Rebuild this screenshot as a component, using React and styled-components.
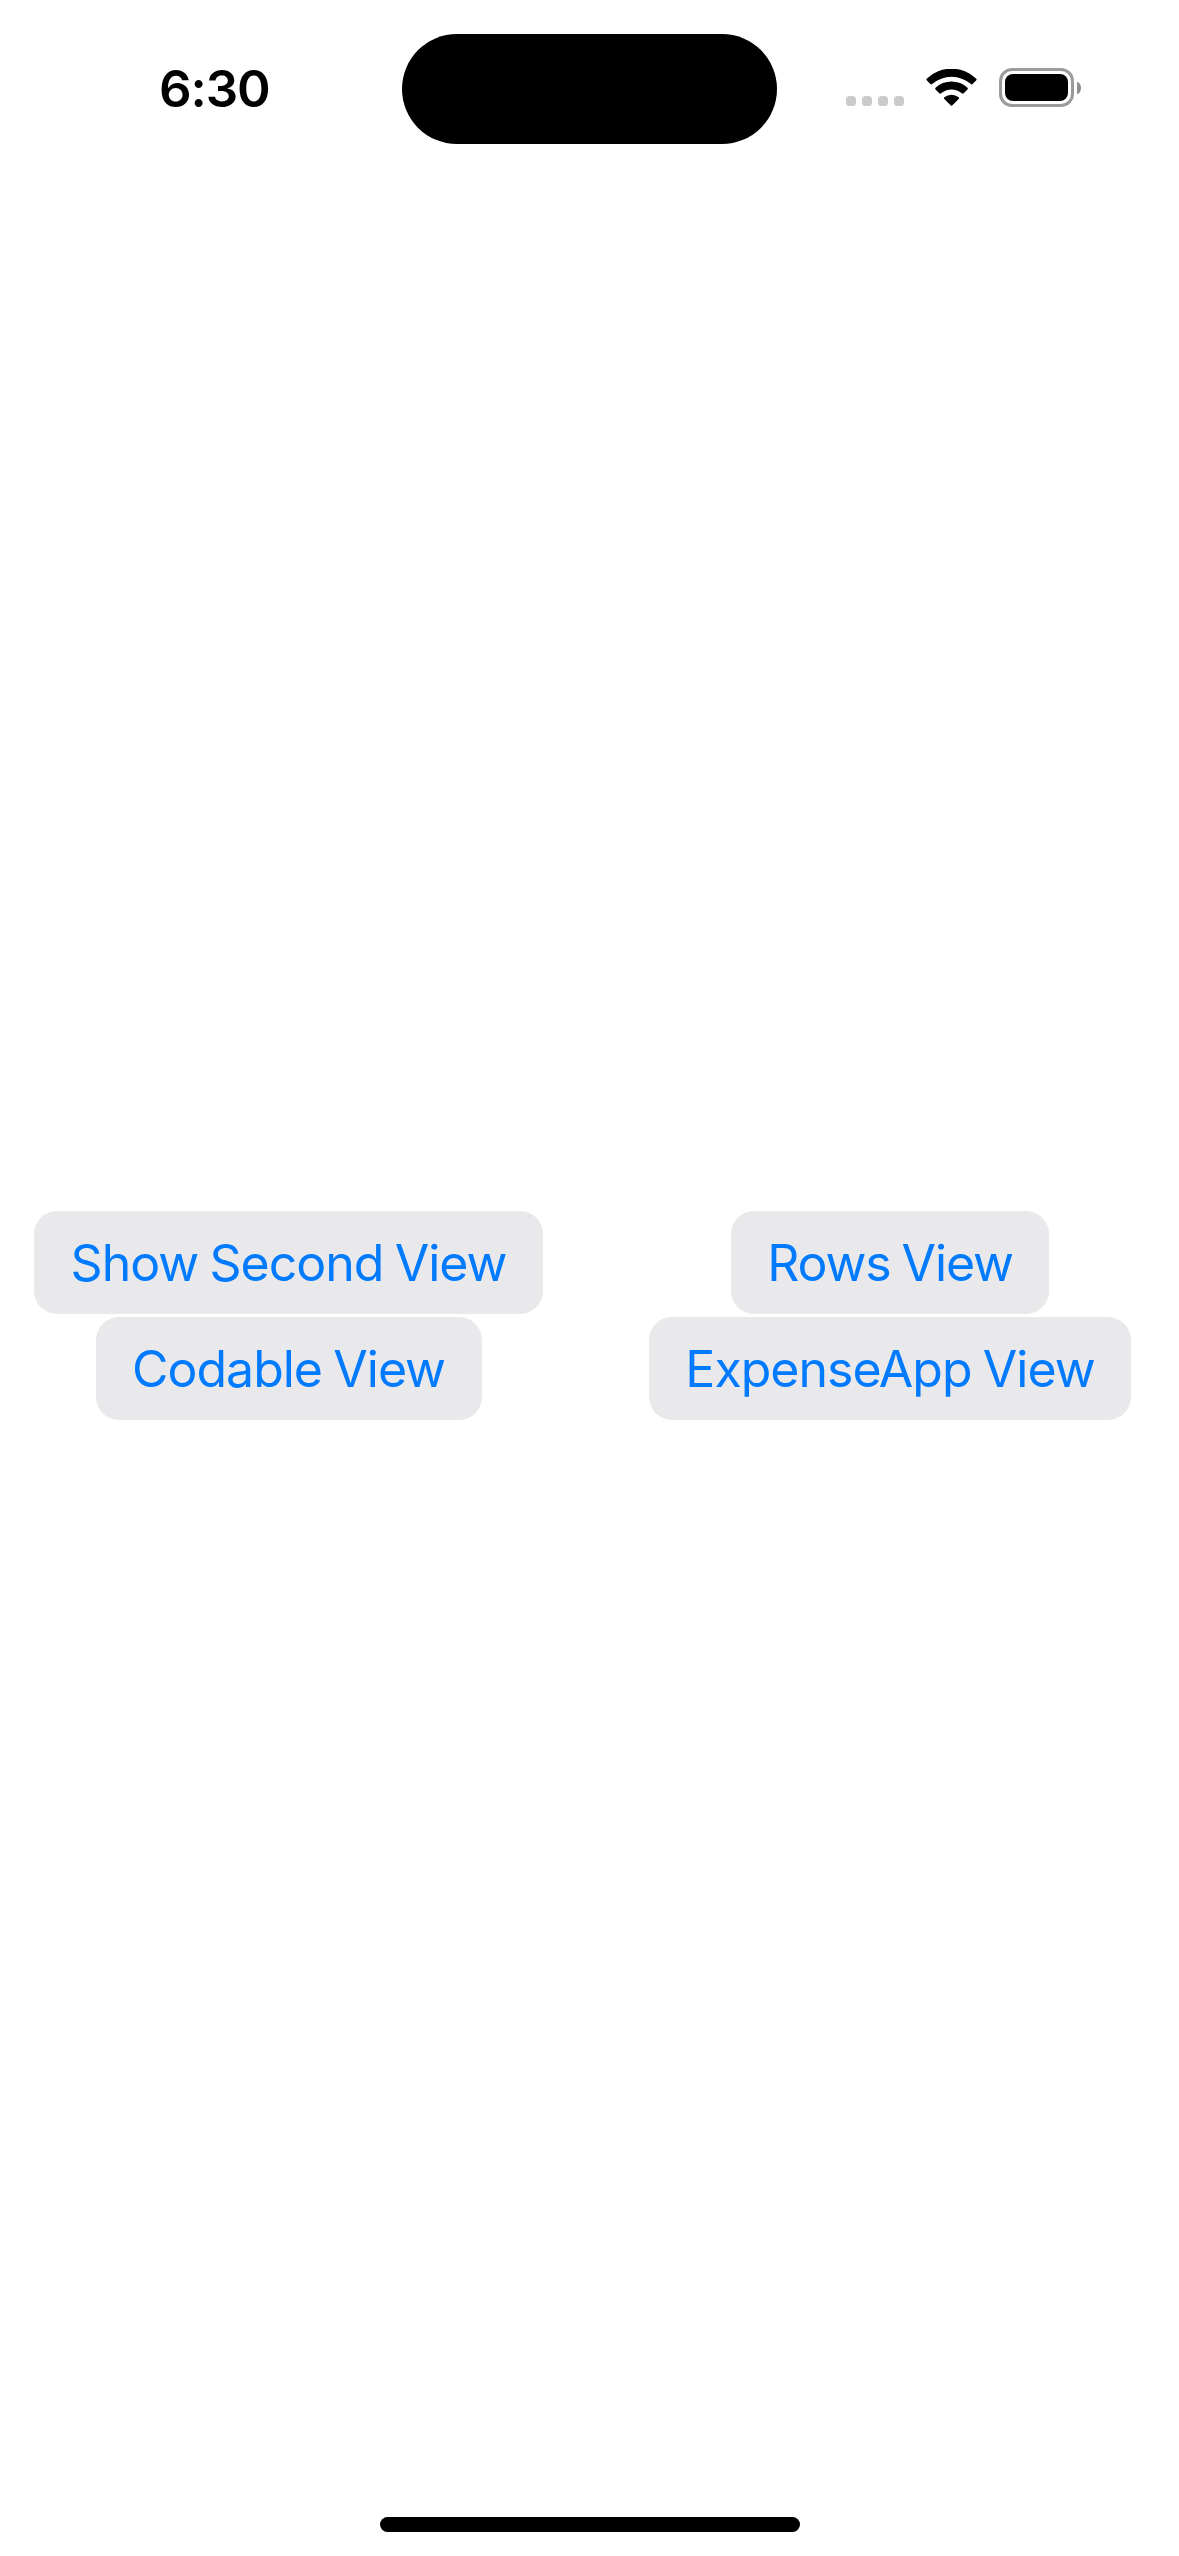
import React from "react";
import styled, { createGlobalStyle } from "styled-components";

const GlobalStyle = createGlobalStyle`
  *, *::before, *::after { box-sizing: border-box; }
  body { margin: 0; background: #fff; }
`;

const Screen = styled.div`
  width: 1179px;
  height: 2556px;
  display: flex;
  flex-direction: column;
  background: #fff;
  overflow: hidden;
  font-family: Inter, "Liberation Sans", sans-serif;
`;

const StatusBar = styled.header`
  height: 177px;
  padding-top: 34px;
  display: grid;
  grid-template-columns: 402px 375px 402px;
  align-items: start;
`;

const Clock = styled.time`
  height: 110px;
  padding-left: 159px;
  line-height: 110px;
  font-size: 51px;
  font-weight: 600;
  letter-spacing: -1.1px;
  color: #000;
`;

const Island = styled.div`
  height: 110px;
  border-radius: 55px;
  background: #000;
`;

const Indicators = styled.div`
  height: 110px;
  padding-left: 69px;
  display: flex;
  align-items: flex-start;
`;

const SignalDots = styled.div`
  display: flex;
  gap: 6px;
  margin-top: 62px;
`;

const Dot = styled.i`
  width: 10px;
  height: 10px;
  border-radius: 3.5px;
  background: #cbcbcb;
`;

const WifiIcon = styled.svg`
  width: 51px;
  height: 37px;
  margin: 35px 0 0 22px;
`;

const Battery = styled.div`
  display: flex;
  align-items: center;
  gap: 3px;
  margin: 34px 0 0 22px;
`;

const BatteryShell = styled.div`
  width: 75px;
  height: 39px;
  padding: 3px;
  border: 3px solid #9b9b9b;
  border-radius: 13px;
`;

const BatteryLevel = styled.div`
  height: 27px;
  border-radius: 8px;
  background: #000;
`;

const BatteryTip = styled.div`
  width: 4px;
  height: 12px;
  border-radius: 0 4px 4px 0 / 0 6px 6px 0;
  background: #8f8f8f;
`;

const Content = styled.main`
  flex: 1;
  padding: 0 48px 0 34px;
  display: flex;
  flex-direction: column;
  justify-content: center;
`;

const ButtonGrid = styled.div`
  display: grid;
  grid-template-columns: 509px 482px;
  justify-content: space-between;
  justify-items: center;
  row-gap: 3px;
`;

const NavButton = styled.button`
  width: ${(p) => p.$width}px;
  height: 103px;
  padding: 2px 0 0;
  border: 0;
  border-radius: 23px;
  background: #e9e9eb;
  color: #007aff;
  font-family: inherit;
  font-size: 50px;
  font-weight: 400;
  line-height: 101px;
  letter-spacing: ${(p) => p.$tracking}px;
  word-spacing: -1.8px;
  white-space: nowrap;
`;

const HomeArea = styled.footer`
  height: 102px;
  padding-bottom: 24px;
  display: flex;
  align-items: flex-end;
  justify-content: center;
`;

const HomeIndicator = styled.div`
  width: 420px;
  height: 15px;
  border-radius: 8px;
  background: #000;
`;

const links = [
  { label: "Show Second View", width: 509, tracking: -1 },
  { label: "Rows View", width: 318, tracking: -1.15 },
  { label: "Codable View", width: 386, tracking: -1 },
  { label: "ExpenseApp View", width: 482, tracking: -1 },
];

export default function App() {
  return (
    <Screen>
      <GlobalStyle />
      <StatusBar>
        <Clock>6:30</Clock>
        <Island />
        <Indicators>
          <SignalDots>
            <Dot />
            <Dot />
            <Dot />
            <Dot />
          </SignalDots>
          <WifiIcon viewBox="0 0 150 111" preserveAspectRatio="none">
            <path d="M2 29 Q0 31.500 2 33.500 L13 45 Q15 47.500 18 45 A86 86 0 0 1 132 45 Q135 47.500 137 45 L148 33.500 Q150 31.500 148 29 A104 104 0 0 0 2 29Z" />
            <path d="M28 56.500 Q25.500 59 28 61.500 L39 73 Q41.500 75.500 44.500 73 A46 46 0 0 1 105.500 73 Q108.500 75.500 111 73 L122 61.500 Q124.500 59 122 56.500 A67 67 0 0 0 28 56.500Z" />
            <path d="M54 85 Q51.500 87.500 54 90 L73 109.500 Q75 111.500 77 109.500 L96 90 Q98.500 87.500 96 85 A32 32 0 0 0 54 85Z" />
          </WifiIcon>
          <Battery>
            <BatteryShell>
              <BatteryLevel />
            </BatteryShell>
            <BatteryTip />
          </Battery>
        </Indicators>
      </StatusBar>
      <Content>
        <ButtonGrid>
          {links.map((link) => (
            <NavButton key={link.label} $width={link.width} $tracking={link.tracking}>
              {link.label}
            </NavButton>
          ))}
        </ButtonGrid>
      </Content>
      <HomeArea>
        <HomeIndicator />
      </HomeArea>
    </Screen>
  );
}
